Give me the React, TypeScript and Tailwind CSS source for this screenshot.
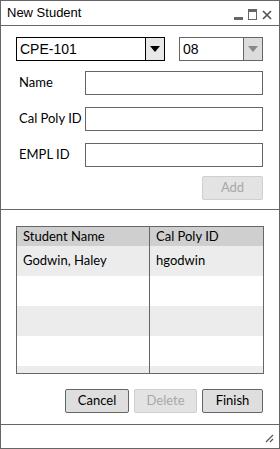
import React from "react";

const lab = { fontFamily: "Lato, 'Open Sans', sans-serif" } as React.CSSProperties;
const ari = { fontFamily: "'Liberation Sans', Arial, sans-serif" } as React.CSSProperties;

function Arrow({ color }: { color: string }) {
  return (
    <svg width="10" height="6" viewBox="0 0 10 6">
      <polygon points="0,0 10,0 5,6" fill={color} />
    </svg>
  );
}

function Input() {
  return <div className="w-[178px] h-[24px] border border-[#666] bg-white" />;
}

export default function App() {
  const rows = [
    ["Godwin, Haley", "hgodwin"],
    ["", ""],
    ["", ""],
    ["", ""],
    ["", ""],
  ];
  return (
    <div className="w-[280px] h-[449px] border border-[#666] bg-white flex flex-col text-[13px] text-black" style={lab}>
      {/* title bar */}
      <div className="h-[25px] border-b border-[#666] flex items-center justify-between pl-[6px] pr-[7px] shrink-0">
        <span className="text-[13px] leading-none -mt-[2px]" style={ari}>New Student</span>
        <div className="flex items-end gap-[5px] mt-[2px]">
          <div className="w-[9px] h-[3px] bg-[#666]" />
          <div className="w-[9px] h-[11px] border border-[#666] border-t-[3px]" />
          <svg width="10" height="10" viewBox="0 0 10 10" className="mb-[0px]">
            <path d="M1 1 L9 9 M9 1 L1 9" stroke="#555" strokeWidth="1.7" />
          </svg>
        </div>
      </div>

      {/* form */}
      <div className="h-[184px] border-b border-[#666] pt-[11px] pl-[15px] pr-[16px] shrink-0 flex flex-col">
        <div className="flex gap-[14px]">
          <div className="w-[149px] h-[24px] border border-black flex">
            <div className="flex-1 flex items-center pl-[3px] text-[14px]" style={ari}>CPE-101</div>
            <div className="w-[19px] border-l border-black bg-[#e8e8e8] flex items-center justify-center">
              <Arrow color="#000" />
            </div>
          </div>
          <div className="w-[84px] h-[24px] border border-[#666] flex">
            <div className="flex-1 flex items-center pl-[3px] text-[14px]" style={ari}>08</div>
            <div className="w-[19px] border-l border-[#666] bg-[#dcdcdc] flex items-center justify-center">
              <Arrow color="#888" />
            </div>
          </div>
        </div>
        <div className="flex items-center mt-[10px]">
          <div className="w-[69px] pl-[3px]">Name</div>
          <Input />
        </div>
        <div className="flex items-center mt-[12px]">
          <div className="w-[69px] pl-[3px]">Cal Poly ID</div>
          <Input />
        </div>
        <div className="flex items-center mt-[12px]">
          <div className="w-[69px] pl-[3px]">EMPL ID</div>
          <Input />
        </div>
        <div className="flex justify-end mt-[9px]">
          <div className="w-[61px] h-[24px] border border-[#cfcfcf] bg-[#e3e3e3] rounded-[2px] flex items-center justify-center text-[#a8a8a8]">
            Add
          </div>
        </div>
      </div>

      {/* table section */}
      <div className="flex-1 pt-[16px] pl-[15px] pr-[15px] flex flex-col">
        <div className="w-[248px] h-[148px] border border-[#666] flex flex-col overflow-hidden">
          <div className="h-[19px] bg-[#cfcfcf] flex shrink-0">
            <div className="w-[133px] border-r border-[#666] pl-[6px] flex items-center">Student Name</div>
            <div className="flex-1 pl-[6px] flex items-center">Cal Poly ID</div>
          </div>
          {rows.map((r, i) => (
            <div key={i} className={`h-[30px] flex shrink-0 ${i % 2 === 0 ? "bg-[#ececec]" : "bg-white"}`}>
              <div className="w-[133px] border-r border-[#666] pl-[6px] flex items-center">{r[0]}</div>
              <div className="flex-1 pl-[6px] flex items-center">{r[1]}</div>
            </div>
          ))}
        </div>
        <div className="flex justify-end gap-[5px] mt-[15px] pr-[1px]">
          <div className="w-[64px] h-[24px] border border-[#666] bg-[#dedede] rounded-[2px] flex items-center justify-center">Cancel</div>
          <div className="w-[63px] h-[24px] border border-[#cfcfcf] bg-[#e3e3e3] rounded-[2px] flex items-center justify-center text-[#a8a8a8]">Delete</div>
          <div className="w-[61px] h-[24px] border border-[#666] bg-[#dedede] rounded-[2px] flex items-center justify-center">Finish</div>
        </div>
      </div>

      {/* status bar */}
      <div className="h-[24px] border-t border-[#666] flex items-end justify-end pr-[5px] pb-[5px] shrink-0">
        <svg width="9" height="9" viewBox="0 0 9 9">
          <path d="M1 8 L8 1 M5 8 L8 5" stroke="#555" strokeWidth="1.2" />
        </svg>
      </div>
    </div>
  );
}
